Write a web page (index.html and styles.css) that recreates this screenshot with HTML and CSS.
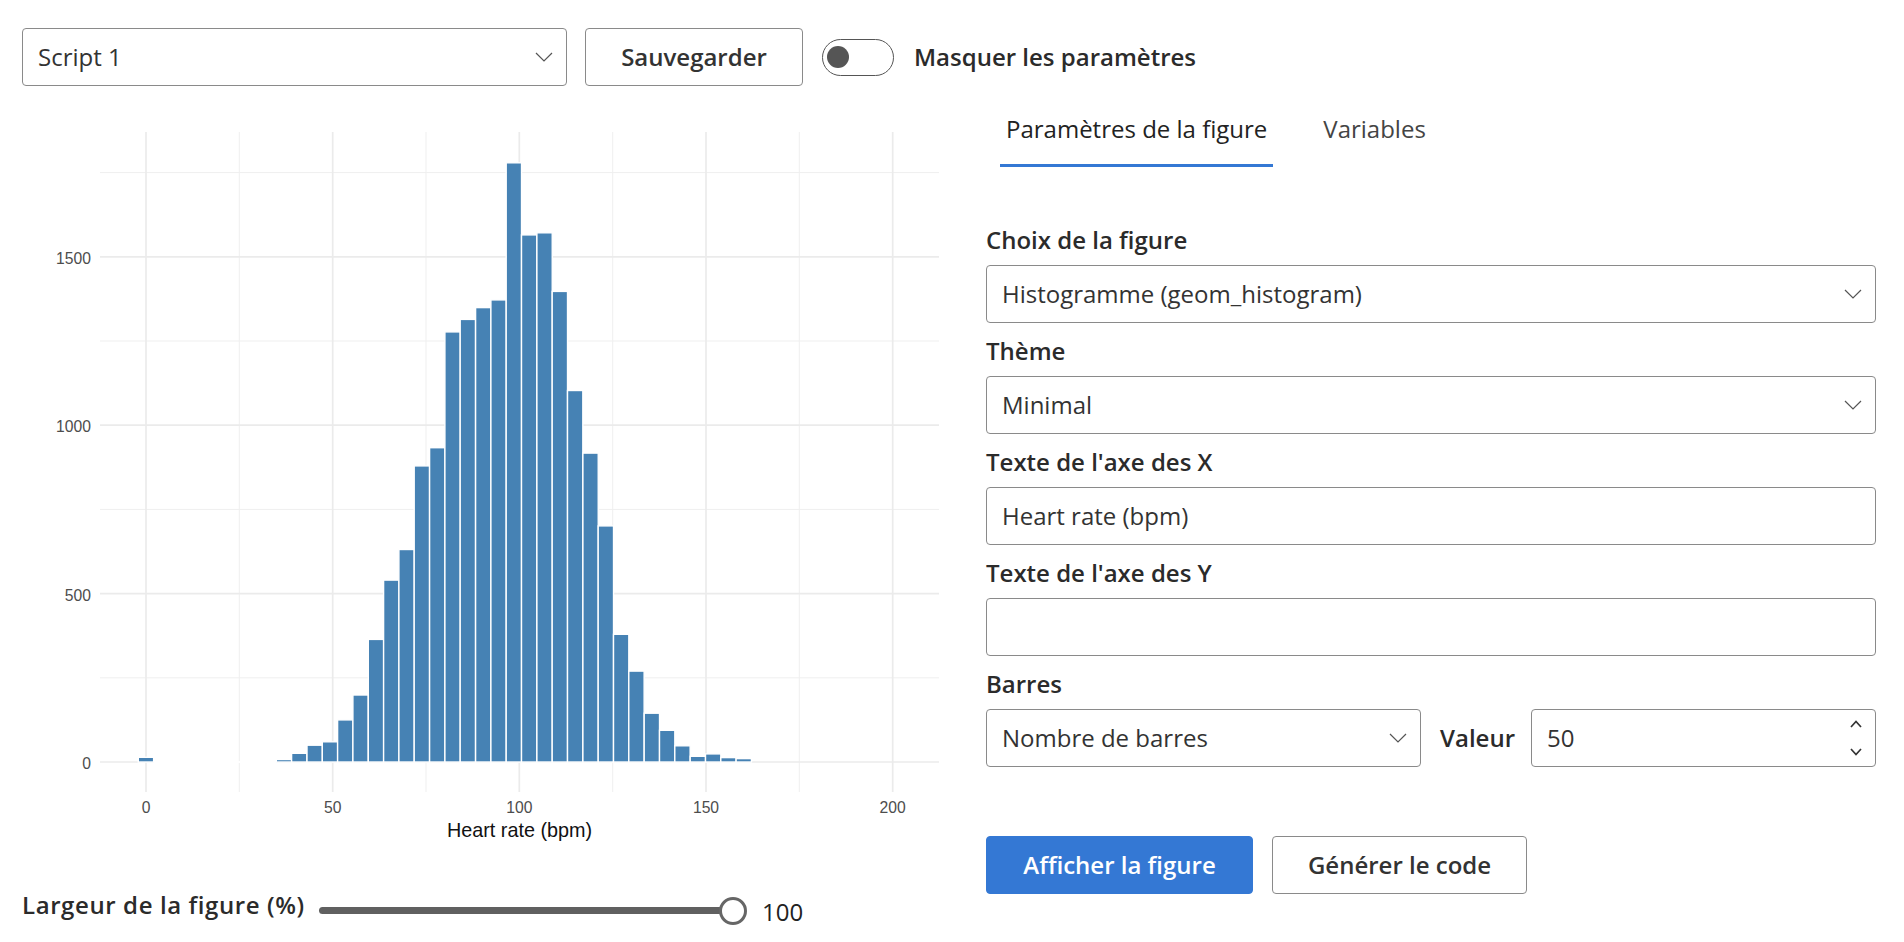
FILE: index.html
```html
<!DOCTYPE html>
<html lang="fr">
<head>
<meta charset="utf-8">
<title>Figure</title>
<link rel="stylesheet" href="styles.css">
</head>
<body>
<div class="topbar">
  <div class="select script-select"><span>Script 1</span><svg class="chev" viewBox="0 0 18 10"><polyline points="1,1 9,9 17,1"/></svg></div>
  <button class="btn btn-outline save">Sauvegarder</button>
  <div class="switch"><span class="knob"></span></div>
  <span class="switch-label">Masquer les paramètres</span>
</div>

<div class="main">
  <div class="left">
    <svg class="chart" viewBox="22 105 918 770" width="918" height="770">
      <g class="grid-minor">
        <line x1="100" y1="677.8" x2="939" y2="677.8"/>
        <line x1="100" y1="509.4" x2="939" y2="509.4"/>
        <line x1="100" y1="341.0" x2="939" y2="341.0"/>
        <line x1="100" y1="172.6" x2="939" y2="172.6"/>
        <line x1="239.3" y1="132" x2="239.3" y2="792"/>
        <line x1="426.0" y1="132" x2="426.0" y2="792"/>
        <line x1="612.7" y1="132" x2="612.7" y2="792"/>
        <line x1="799.3" y1="132" x2="799.3" y2="792"/>
      </g>
      <g class="grid-major">
        <line x1="100" y1="762" x2="939" y2="762"/>
        <line x1="100" y1="593.6" x2="939" y2="593.6"/>
        <line x1="100" y1="425.2" x2="939" y2="425.2"/>
        <line x1="100" y1="256.8" x2="939" y2="256.8"/>
        <line x1="146" y1="132" x2="146" y2="792"/>
        <line x1="332.7" y1="132" x2="332.7" y2="792"/>
        <line x1="519.3" y1="132" x2="519.3" y2="792"/>
        <line x1="706.0" y1="132" x2="706.0" y2="792"/>
        <line x1="892.7" y1="132" x2="892.7" y2="792"/>
      </g>
      <line class="zero-bars" x1="153.7" y1="762" x2="276.3" y2="762"/>
      <g class="bars">
        <rect x="138.3" y="757.3" width="15.33" height="4.7"/>
        <rect x="169.0" y="761.3" width="15.33" height="0.7"/>
        <rect x="276.3" y="759.5" width="15.33" height="2.5"/>
        <rect x="291.6" y="753.3" width="15.33" height="8.7"/>
        <rect x="307.0" y="745.2" width="15.33" height="16.8"/>
        <rect x="322.3" y="741.8" width="15.33" height="20.2"/>
        <rect x="337.6" y="719.9" width="15.33" height="42.1"/>
        <rect x="352.9" y="695.0" width="15.33" height="67.0"/>
        <rect x="368.3" y="639.4" width="15.33" height="122.6"/>
        <rect x="383.6" y="580.1" width="15.33" height="181.9"/>
        <rect x="398.9" y="549.5" width="15.33" height="212.5"/>
        <rect x="414.2" y="465.9" width="15.33" height="296.1"/>
        <rect x="429.6" y="447.7" width="15.33" height="314.3"/>
        <rect x="444.9" y="331.9" width="15.33" height="430.1"/>
        <rect x="460.2" y="319.4" width="15.33" height="442.6"/>
        <rect x="475.6" y="307.6" width="15.33" height="454.4"/>
        <rect x="490.9" y="299.9" width="15.33" height="462.1"/>
        <rect x="506.2" y="162.8" width="15.33" height="599.2"/>
        <rect x="521.5" y="234.9" width="15.33" height="527.1"/>
        <rect x="536.9" y="232.8" width="15.33" height="529.2"/>
        <rect x="552.2" y="291.4" width="15.33" height="470.6"/>
        <rect x="567.5" y="390.5" width="15.33" height="371.5"/>
        <rect x="582.9" y="453.1" width="15.33" height="308.9"/>
        <rect x="598.2" y="525.9" width="15.33" height="236.1"/>
        <rect x="613.5" y="634.3" width="15.33" height="127.7"/>
        <rect x="628.8" y="671.1" width="15.33" height="90.9"/>
        <rect x="644.2" y="713.2" width="15.33" height="48.8"/>
        <rect x="659.5" y="730.3" width="15.33" height="31.7"/>
        <rect x="674.8" y="745.8" width="15.33" height="16.2"/>
        <rect x="690.2" y="756.3" width="15.33" height="5.7"/>
        <rect x="705.5" y="753.9" width="15.33" height="8.1"/>
        <rect x="720.8" y="757.6" width="15.33" height="4.4"/>
        <rect x="736.1" y="758.6" width="15.33" height="3.4"/>
      </g>
      <g class="tick tick-y">
        <text x="91" y="769">0</text>
        <text x="91" y="600.6">500</text>
        <text x="91" y="432.2">1000</text>
        <text x="91" y="263.8">1500</text>
      </g>
      <g class="tick tick-x">
        <text x="146" y="813">0</text>
        <text x="332.7" y="813">50</text>
        <text x="519.3" y="813">100</text>
        <text x="706.0" y="813">150</text>
        <text x="892.7" y="813">200</text>
      </g>
      <text class="axis-title" x="519.5" y="836.7">Heart rate (bpm)</text>
    </svg>
    <div class="slider-row">
      <span class="slider-label">Largeur de la figure (%)</span>
      <div class="slider"><div class="track"></div><div class="thumb"></div></div>
      <span class="slider-value">100</span>
    </div>
  </div>

  <div class="right">
    <nav class="tabs">
      <a class="tab active">Paramètres de la figure</a>
      <a class="tab">Variables</a>
    </nav>
    <div class="form">
      <div class="group">
        <span class="label">Choix de la figure</span>
        <div class="select"><span>Histogramme (geom_histogram)</span><svg class="chev" viewBox="0 0 18 10"><polyline points="1,1 9,9 17,1"/></svg></div>
      </div>
      <div class="group">
        <span class="label">Thème</span>
        <div class="select"><span>Minimal</span><svg class="chev" viewBox="0 0 18 10"><polyline points="1,1 9,9 17,1"/></svg></div>
      </div>
      <div class="group">
        <span class="label">Texte de l'axe des X</span>
        <div class="input"><span>Heart rate (bpm)</span></div>
      </div>
      <div class="group">
        <span class="label">Texte de l'axe des Y</span>
        <div class="input"></div>
      </div>
      <div class="group">
        <span class="label">Barres</span>
        <div class="bars-row">
          <div class="select bars-select"><span>Nombre de barres</span><svg class="chev" viewBox="0 0 18 10"><polyline points="1,1 9,9 17,1"/></svg></div>
          <span class="valeur">Valeur</span>
          <div class="input num"><span>50</span><svg class="spin" viewBox="0 0 12 40"><polyline points="1,9 6,3.5 11,9"/><polyline points="1,31 6,36.5 11,31"/></svg></div>
        </div>
      </div>
      <div class="actions">
        <button class="btn btn-primary">Afficher la figure</button>
        <button class="btn btn-outline gen">Générer le code</button>
      </div>
    </div>
  </div>
</div>
</body>
</html>
```

FILE: styles.css
```css
* { box-sizing: border-box; }

html, body { margin: 0; }

body {
  padding: 28px 28px 0 22px;
  font-family: "Open Sans", "Noto Sans", sans-serif;
  font-size: 24px;
  line-height: 1.5;
  color: #333;
  background: #fff;
}

.topbar {
  display: flex;
  align-items: center;
  height: 58px;
}

.select {
  display: flex;
  align-items: center;
  justify-content: space-between;
  height: 58px;
  border: 1px solid #8a8a8a;
  border-radius: 4px;
  padding: 0 13px 0 15px;
  background: #fff;
  color: #333;
}

.script-select { width: 545px; }

.chev {
  width: 18px;
  height: 10px;
  flex: none;
}
.chev polyline, .spin polyline {
  fill: none;
  stroke: #555;
  stroke-width: 1.2;
}
.spin polyline { stroke: #333; stroke-width: 1.7; }

.btn {
  font: inherit;
  font-weight: 600;
  height: 58px;
  border-radius: 4px;
  display: flex;
  align-items: center;
  justify-content: center;
  padding: 0;
  cursor: pointer;
}

.btn-outline {
  background: #fff;
  border: 1px solid #8a8a8a;
  color: #333;
}

.btn-primary {
  background: #3478d4;
  border: 1px solid #3478d4;
  color: #fff;
  width: 267px;
}

.save { width: 218px; margin-left: 18px; }
.gen { width: 255px; }

.switch {
  width: 72px;
  height: 37px;
  border: 1.5px solid #555;
  border-radius: 19px;
  margin-left: 19px;
  display: flex;
  align-items: center;
  padding-left: 4px;
}

.knob {
  width: 22px;
  height: 22px;
  border-radius: 50%;
  background: #555;
}

.switch-label {
  font-weight: 600;
  margin-left: 20px;
  color: #2b2b2b;
}

.main {
  display: grid;
  grid-template-columns: 918px 890px;
  column-gap: 46px;
  margin-top: 19px;
}

.chart {
  display: block;
  width: 918px;
  height: 770px;
}

.grid-minor line { stroke: #efefef; stroke-width: 1; }
.grid-major line { stroke: #ebebeb; stroke-width: 1.7; }
.zero-bars { stroke: #fff; stroke-width: 2; }
.bars rect { fill: #4682b4; stroke: #fff; stroke-width: 1.4; }

.tick {
  font-family: "Liberation Sans", Arial, sans-serif;
  font-size: 15.7px;
  fill: #4d4d4d;
}
.tick-y { text-anchor: end; }
.tick-x { text-anchor: middle; }

.axis-title {
  font-family: "Liberation Sans", Arial, sans-serif;
  font-size: 19.8px;
  fill: #111;
  text-anchor: middle;
}

.slider-row {
  display: flex;
  align-items: center;
  height: 66px;
}

.slider-label {
  flex: none;
  width: 297px;
  font-weight: 600;
  letter-spacing: 0.6px;
  color: #2b2b2b;
  padding-bottom: 6px;
}

.slider {
  position: relative;
  flex: none;
  width: 428px;
  height: 28px;
  margin-top: 6px;
}

.track {
  position: absolute;
  left: 0;
  right: 14px;
  top: 10px;
  height: 7px;
  border-radius: 4px;
  background: #606060;
}

.thumb {
  position: absolute;
  left: 400px;
  top: 0;
  width: 28px;
  height: 28px;
  border-radius: 50%;
  border: 3px solid #666;
  background: #fff;
}

.slider-value {
  margin-left: 15px;
  padding-top: 8px;
  color: #222;
}

.tabs {
  display: flex;
  margin-left: 14px;
  gap: 44px;
}

.tab {
  padding: 6px 6px 17px;
  border-bottom: 3px solid transparent;
  color: #444;
}

.tab.active {
  border-bottom-color: #3478d4;
  color: #222;
  font-weight: 500;
}

.form { margin-top: 55px; }

.group { margin-bottom: 10px; }

.label {
  display: block;
  font-weight: 600;
  line-height: 36px;
  margin-bottom: 7px;
  color: #2b2b2b;
}

.input {
  display: flex;
  align-items: center;
  justify-content: space-between;
  height: 58px;
  border: 1px solid #8a8a8a;
  border-radius: 4px;
  padding: 0 13px 0 15px;
  background: #fff;
  color: #333;
}

.bars-row {
  display: flex;
  align-items: center;
}

.bars-select { width: 435px; flex: none; }

.valeur {
  flex: none;
  width: 110px;
  padding-left: 19px;
  font-weight: 600;
  color: #2b2b2b;
}

.num { flex: 1; }

.spin {
  width: 12px;
  height: 40px;
  flex: none;
}

.actions {
  display: flex;
  gap: 19px;
  margin-top: 69px;
}
```
